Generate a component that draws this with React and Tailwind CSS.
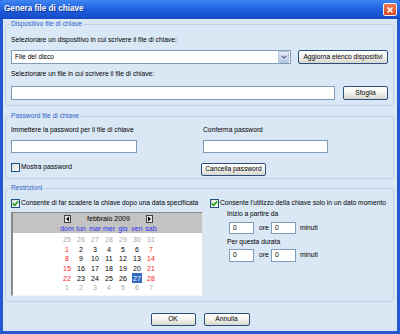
import React from "react";

function Checkbox({ checked }) {
  return (
    <span className="w-[9px] h-[9px] border border-[#1c5180] bg-linear-to-br from-[#dcdcd7] to-white flex items-center justify-center shrink-0">
      {checked && (
        <svg width="7" height="7" viewBox="0 0 7 7">
          <path d="M0.8 3.4 L2.7 5.3 L6.2 1.4" stroke="#21a121" strokeWidth="1.6" fill="none" />
        </svg>
      )}
    </span>
  );
}

function Btn({ children, className }) {
  return (
    <div
      className={`flex items-center justify-center rounded-[2px] border border-[#2e4f7e] bg-linear-to-b from-white via-[#f3f3ef] to-[#d6d6ce] text-black shrink-0 ${className}`}
    >
      {children}
    </div>
  );
}

function Field({ className, children }) {
  return (
    <div className={`flex items-center border border-[#7f9db9] bg-white pl-[3px] shrink-0 ${className}`}>
      {children}
    </div>
  );
}

function Legend({ children }) {
  return (
    <div className="-mt-[6px] h-[11px] flex items-center">
      <span className="bg-[#dae7f5] -ml-px px-px text-[#2f62c9]">{children}</span>
    </div>
  );
}

function Arrow({ dir }) {
  return (
    <span className="w-[7px] h-[8px] border border-[#404040] bg-[#e8e8e8] flex items-center justify-center">
      <svg width="5" height="6" viewBox="0 0 5 6">
        {dir === "l" ? <path d="M4 0.5 L1 3 L4 5.5 Z" fill="#000" /> : <path d="M1 0.5 L4 3 L1 5.5 Z" fill="#000" />}
      </svg>
    </span>
  );
}

const rows = [
  [25, 26, 27, 28, 29, 30, 31].map((d) => ({ d, o: true })),
  [1, 2, 3, 4, 5, 6, 7].map((d) => ({ d })),
  [8, 9, 10, 11, 12, 13, 14].map((d) => ({ d })),
  [15, 16, 17, 18, 19, 20, 21].map((d) => ({ d })),
  [22, 23, 24, 25, 26, 27, 28].map((d) => ({ d })),
  [1, 2, 3, 4, 5, 6, 7].map((d) => ({ d, o: true })),
];
const names = ["dom", "lun", "mar", "mer", "gio", "ven", "sab"];

function Calendar() {
  return (
    <div className="mt-[4px] h-[84px] w-[192px] flex flex-col border-t border-l-2 border-[#8a8a8a] border-r border-r-[#e4e4e4] border-b border-b-[#f4f4f4] bg-white text-[7px]">
      <div className="h-[20px] bg-[#c3c3c3] pl-[47px]">
        <div className="w-[98px] h-[11px] flex items-center justify-between pl-[4px] pr-[5px]">
          <Arrow dir="l" />
          <span className="text-black">febbraio 2009</span>
          <Arrow dir="r" />
        </div>
        <div className="w-[98px] h-[9px] grid grid-cols-7 items-center">
          {names.map((n) => (
            <span key={n} className="text-center text-[#3030f0]">{n}</span>
          ))}
        </div>
      </div>
      <div className="pl-[47px] pt-[2px]">
        {rows.map((r, i) => (
          <div key={i} className="w-[98px] h-[9.5px] grid grid-cols-7 items-center">
            {r.map((c, j) => {
              const sel = i === 4 && j === 5;
              const color = c.o ? "text-[#a9a9a9]" : j === 0 || j === 6 ? "text-[#ff1a1a]" : "text-black";
              return (
                <span key={j} className="flex justify-center">
                  {sel ? (
                    <span className="bg-[#316ac5] text-white px-[1px] h-[10px] flex items-center">{c.d}</span>
                  ) : (
                    <span className={color}>{c.d}</span>
                  )}
                </span>
              );
            })}
          </div>
        ))}
      </div>
    </div>
  );
}

export default function App() {
  return (
    <div className="w-[400px] h-[334px] bg-[#2358d0] flex flex-col font-['Liberation_Sans',Arial,sans-serif] text-[6.7px] leading-none text-black overflow-hidden">
      <div className="h-[19px] shrink-0 flex items-center justify-between pl-[4px] pr-[3px] bg-linear-to-b from-[#3f86f2] via-[#1f5fe0] to-[#1549c6] rounded-t-[3px]">
        <span className="text-white font-bold text-[8.2px] [text-shadow:1px_1px_0_#0a2a80]">Genera file di chiave</span>
        <div className="w-[14px] h-[13px] rounded-[2px] border border-[#f0f0f0] bg-linear-to-b from-[#ee7a55] to-[#d4461e] flex items-center justify-center">
          <svg width="8" height="8" viewBox="0 0 8 8">
            <path d="M1.5 1.5 L6.5 6.5 M6.5 1.5 L1.5 6.5" stroke="white" strokeWidth="1.6" />
          </svg>
        </div>
      </div>
      <div className="flex-1 mx-[3px] mb-[3px] bg-[#dae7f5] flex flex-col">
        {/* Group 1 */}
        <div className="ml-[2px] mr-[3px] mt-[5px] h-[82px] shrink-0 rounded-[3px] border border-[#c2d2e4] px-[5px] flex flex-col">
          <Legend>Dispositivo file di chiave</Legend>
          <div className="mt-[5px] h-[10px] flex items-center">Selezionare un dispositivo in cui scrivere il file di chiave:</div>
          <div className="mt-[5px] h-[14px] flex">
            <Field className="w-[280px] h-[14px] pr-0 justify-between">
              <span>File del disco</span>
              <span className="w-[11px] h-[12px] mr-px bg-linear-to-b from-[#e4ebf7] to-[#b9c9e6] border border-[#b3c3dd] rounded-[1px] flex items-center justify-center">
                <svg width="6" height="4" viewBox="0 0 6 4">
                  <path d="M0.8 0.8 L3 3 L5.2 0.8" stroke="#4d6185" strokeWidth="1.1" fill="none" />
                </svg>
              </span>
            </Field>
            <Btn className="ml-[7px] w-[90px] h-[14px]">Aggiorna elenco dispositivi</Btn>
          </div>
          <div className="mt-[5px] h-[10px] flex items-center">Selezionare un file in cui scrivere il file di chiave:</div>
          <div className="mt-[7px] h-[14px] flex">
            <Field className="w-[324px] h-[14px]" />
            <Btn className="ml-[8px] w-[45px] h-[14px]">Sfoglia</Btn>
          </div>
        </div>

        {/* Group 2 */}
        <div className="ml-[2px] mr-[3px] mt-[10px] h-[63px] shrink-0 rounded-[3px] border border-[#c2d2e4] px-[5px] flex flex-col">
          <Legend>Password file di chiave</Legend>
          <div className="flex">
            <div className="w-[192px] flex flex-col">
              <div className="mt-[3px] h-[10px] flex items-center">Immettere la password per il file di chiave</div>
              <Field className="mt-[5px] w-[126px] h-[13px]" />
              <div className="mt-[9px] h-[10px] flex items-center gap-[1px]">
                <Checkbox />
                <span>Mostra password</span>
              </div>
            </div>
            <div className="flex flex-col">
              <div className="mt-[3px] h-[10px] flex items-center">Conferma password</div>
              <Field className="mt-[5px] w-[125px] h-[13px]" />
              <Btn className="mt-[10px] -ml-[2px] w-[65px] h-[13px]">Cancella password</Btn>
            </div>
          </div>
        </div>

        {/* Group 3 */}
        <div className="ml-[2px] mr-[3px] mt-[9px] h-[114px] shrink-0 rounded-[3px] border border-[#c2d2e4] px-[5px] flex flex-col">
          <Legend>Restrizioni</Legend>
          <div className="flex">
            <div className="w-[192px] flex flex-col">
              <div className="mt-[4px] h-[10px] flex items-center gap-[1px] whitespace-nowrap">
                <Checkbox checked />
                <span>Consente di far scadere la chiave dopo una data specificata</span>
              </div>
              <Calendar />
            </div>
            <div className="ml-[7px] flex flex-col">
              <div className="mt-[4px] h-[10px] flex items-center gap-[1px] whitespace-nowrap">
                <Checkbox checked />
                <span>Consente l'utilizzo della chiave solo in un dato momento</span>
              </div>
              <div className="mt-[1px] h-[10px] pl-[17px] flex items-center">Inizio a partire da</div>
              <div className="mt-[3px] h-[12px] pl-[19px] flex items-center">
                <Field className="w-[25px] h-[12px]">0</Field>
                <span className="w-[17px] pl-[5px]">ore</span>
                <Field className="w-[25px] h-[12px]">0</Field>
                <span className="pl-[4px]">minuti</span>
              </div>
              <div className="mt-[3px] h-[10px] pl-[17px] flex items-center">Per questa durata</div>
              <div className="mt-[2px] h-[13px] pl-[19px] flex items-center">
                <Field className="w-[25px] h-[13px]">0</Field>
                <span className="w-[17px] pl-[5px]">ore</span>
                <Field className="w-[25px] h-[13px]">0</Field>
                <span className="pl-[4px]">minuti</span>
              </div>
            </div>
          </div>
        </div>

        <div className="mt-[11px] flex justify-center gap-[8px]">
          <Btn className="w-[45px] h-[13px]">OK</Btn>
          <Btn className="w-[46px] h-[13px]">Annulla</Btn>
        </div>
      </div>
    </div>
  );
}
